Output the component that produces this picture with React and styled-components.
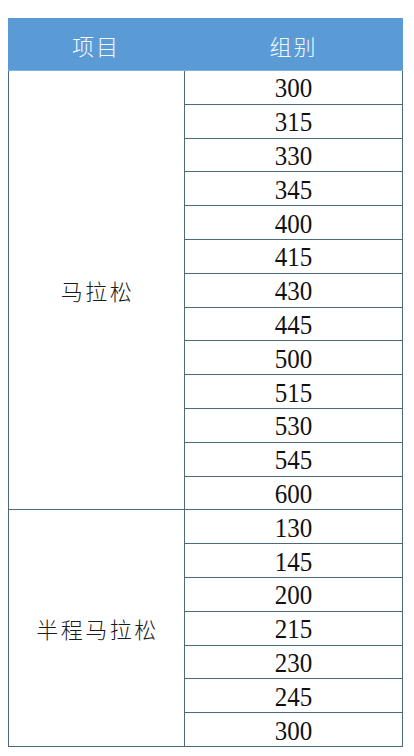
import React from 'react'
import styled, { createGlobalStyle } from 'styled-components'

const GlobalStyle = createGlobalStyle`
  html, body {
    margin: 0;
    padding: 0;
    background: #ffffff;
  }
  body {
    font-family: "Liberation Serif", "Noto Sans CJK SC", serif;
  }
`

const LINE = '#4d687c'

const Page = styled.div`
  width: 414px;
  height: 756px;
  padding: 18px 11px 0 8px;
  box-sizing: border-box;
`

const Table = styled.div`
  display: flex;
  flex-direction: column;
  width: 395px;
`

const Header = styled.div`
  display: grid;
  grid-template-columns: 176px 1fr;
  height: 53px;
  background: #5b9bd5;
  border-bottom: 1px solid #7fb2e0;
  box-sizing: border-box;
`

const HeadCell = styled.div`
  display: flex;
  align-items: center;
  justify-content: center;
  color: #f4f9ff;
  font-family: "Noto Sans CJK SC", sans-serif;
  font-weight: 300;
  font-size: 22px;
  letter-spacing: 2px;
  padding-top: 2px;
`

const Group = styled.div`
  display: grid;
  grid-template-columns: 176px 1fr;
  border-left: 1px solid ${LINE};
  border-right: 1px solid ${LINE};
  border-bottom: 1px solid ${LINE};
`

const Label = styled.div`
  display: flex;
  align-items: center;
  justify-content: center;
  border-right: 1px solid ${LINE};
  font-family: "Noto Sans CJK SC", sans-serif;
  font-weight: 300;
  font-size: 22px;
  letter-spacing: 2.5px;
  color: #1a1a1a;
  padding-left: 2px;
`

const Rows = styled.div`
  display: flex;
  flex-direction: column;
`

const Row = styled.div`
  height: ${({ $last }) => ($last ? '32.8px' : '33.8px')};
  box-sizing: border-box;
  border-bottom: ${({ $last }) => ($last ? 'none' : `1px solid ${LINE}`)};
  display: flex;
  align-items: center;
  justify-content: center;
`

const Num = styled.span`
  display: inline-block;
  font-family: "Liberation Serif", "Times New Roman", serif;
  font-size: 25px;
  line-height: 1;
  color: #111;
  transform: scaleY(1.13);
  margin-top: 1px;
`

const groups = [
  {
    name: '马拉松',
    items: ['300', '315', '330', '345', '400', '415', '430', '445', '500', '515', '530', '545', '600'],
  },
  {
    name: '半程马拉松',
    items: ['130', '145', '200', '215', '230', '245', '300'],
  },
]

export default function App() {
  return (
    <Page>
      <GlobalStyle />
      <Table>
        <Header>
          <HeadCell>项目</HeadCell>
          <HeadCell>组别</HeadCell>
        </Header>
        {groups.map((g) => (
          <Group key={g.name}>
            <Label>{g.name}</Label>
            <Rows>
              {g.items.map((n, i) => (
                <Row key={i} $last={i === g.items.length - 1}>
                  <Num>{n}</Num>
                </Row>
              ))}
            </Rows>
          </Group>
        ))}
      </Table>
    </Page>
  )
}
